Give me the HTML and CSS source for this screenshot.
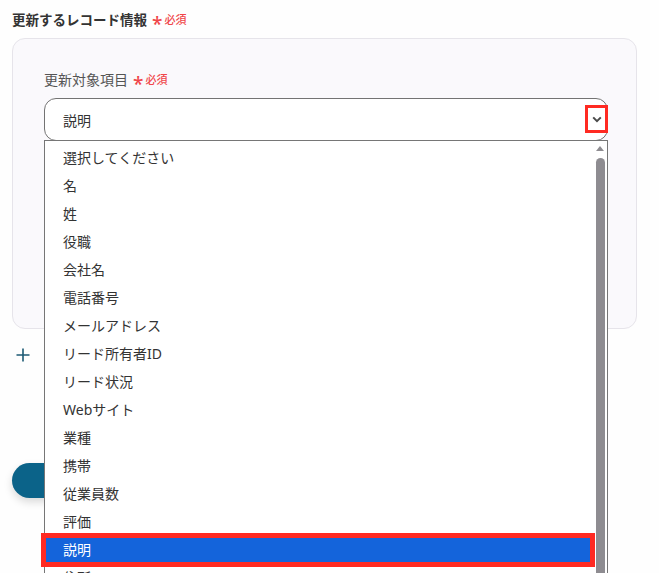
FILE: index.html
```html
<!DOCTYPE html>
<html lang="ja">
<head>
<meta charset="utf-8">
<link rel="stylesheet" href="styles.css">
</head>
<body>
<div class="page">
  <div class="section-title">更新するレコード情報<span class="req"><span class="ast">*</span>必須</span></div>
  <div class="card">
    <div class="label">更新対象項目<span class="req"><span class="ast">*</span>必須</span></div>
    <div class="select-wrap">
      <div class="select">
        <span class="value">説明</span>
        <span class="chev-box">
          <svg width="10" height="7" viewBox="0 0 10 7"><path d="M1.2 1.4 L5 5.2 L8.8 1.4" fill="none" stroke="#4a4a4a" stroke-width="2"/></svg>
        </span>
      </div>
      <div class="listbox">
        <ul class="options">
          <li>選択してください</li>
          <li>名</li>
          <li>姓</li>
          <li>役職</li>
          <li>会社名</li>
          <li>電話番号</li>
          <li>メールアドレス</li>
          <li>リード所有者ID</li>
          <li>リード状況</li>
          <li>Webサイト</li>
          <li>業種</li>
          <li>携帯</li>
          <li>従業員数</li>
          <li>評価</li>
          <li class="selected">説明</li>
          <li>住所</li>
        </ul>
        <div class="scrollbar">
          <div class="arrow-up"></div>
          <div class="thumb"></div>
        </div>
      </div>
    </div>
  </div>
  <div class="add">
    <svg width="14" height="14" viewBox="0 0 14 14"><path d="M7 0.5 V13.5 M0.5 7 H13.5" stroke="#1c5a74" stroke-width="1.6" fill="none"/></svg>
  </div>
  <div class="btn"></div>
</div>
</body>
</html>
```
FILE: styles.css
```css
* { box-sizing: border-box; }
html, body {
  margin: 0;
  padding: 0;
  background: #fefefe;
  font-family: "Noto Sans", "Noto Sans CJK JP", sans-serif;
  color: #333;
  overflow: hidden;
}
.page {
  padding: 12px 0 0 12px;
  height: 573px;
}
.section-title {
  font-size: 13.5px;
  font-weight: 700;
  line-height: 16px;
  color: #333;
  display: flex;
  align-items: center;
}
.req {
  color: #f0464a;
  font-size: 11px;
  font-weight: 500;
  margin-left: 5px;
  display: inline-flex;
  align-items: center;
}
.ast {
  font-size: 19px;
  font-weight: 500;
  line-height: 10px;
  margin-right: 2px;
  position: relative;
  top: 4px;
}
.card {
  margin-top: 10px;
  width: 625px;
  height: 291px;
  border: 1px solid #e6e4ea;
  border-radius: 13px;
  background: #faf9fc;
  padding: 33px 0 0 31px;
}
.label {
  font-size: 14px;
  line-height: 16px;
  color: #555;
  display: flex;
  align-items: center;
}
.select-wrap {
  position: relative;
  margin-top: 10px;
  width: 564px;
}
.select {
  height: 43px;
  border: 1px solid #737373;
  border-radius: 12px;
  background: #fff;
  display: flex;
  align-items: center;
  padding-left: 18px;
  font-size: 14px;
  color: #333;
  position: relative;
}
.chev-box {
  position: absolute;
  right: -1px;
  top: 6px;
  width: 23px;
  height: 28px;
  border: 3px solid #ff2a22;
  background: #fff;
  display: flex;
  align-items: center;
  justify-content: center;
}
.listbox {
  position: absolute;
  left: 0;
  top: 42px;
  width: 564px;
  height: 460px;
  border: 1px solid #767676;
  background: #fff;
  z-index: 5;
}
.options {
  list-style: none;
  margin: 0;
  padding: 3px 0 0 0;
  width: 550px;
}
.options li {
  height: 28px;
  line-height: 28px;
  padding-left: 18px;
  font-size: 14px;
  color: #333;
  white-space: nowrap;
}
.options li.selected {
  position: relative;
  background: #1464db;
  color: #fff;
}
.options li.selected::after {
  content: "";
  position: absolute;
  left: -4px;
  right: 0;
  top: -3px;
  bottom: -3px;
  border: 5px solid #ff2a22;
}
.scrollbar {
  position: absolute;
  left: 550px;
  top: 0;
  width: 10px;
  bottom: 0;
}
.arrow-up {
  width: 0;
  height: 0;
  margin: 5px auto 0;
  border-left: 4px solid transparent;
  border-right: 4px solid transparent;
  border-bottom: 5px solid #8e8c91;
}
.thumb {
  margin: 7px auto 0;
  width: 9px;
  height: 420px;
  border-radius: 5px 5px 0 0;
  background: #8e8c91;
}
.add {
  margin: 19px 0 0 4px;
  width: 14px;
  height: 14px;
  display: flex;
}
.btn {
  margin-top: 101px;
  width: 200px;
  height: 35px;
  border-radius: 18px;
  background: #0b6389;
  box-shadow: 0 4px 8px rgba(0,0,0,0.15);
}
```
